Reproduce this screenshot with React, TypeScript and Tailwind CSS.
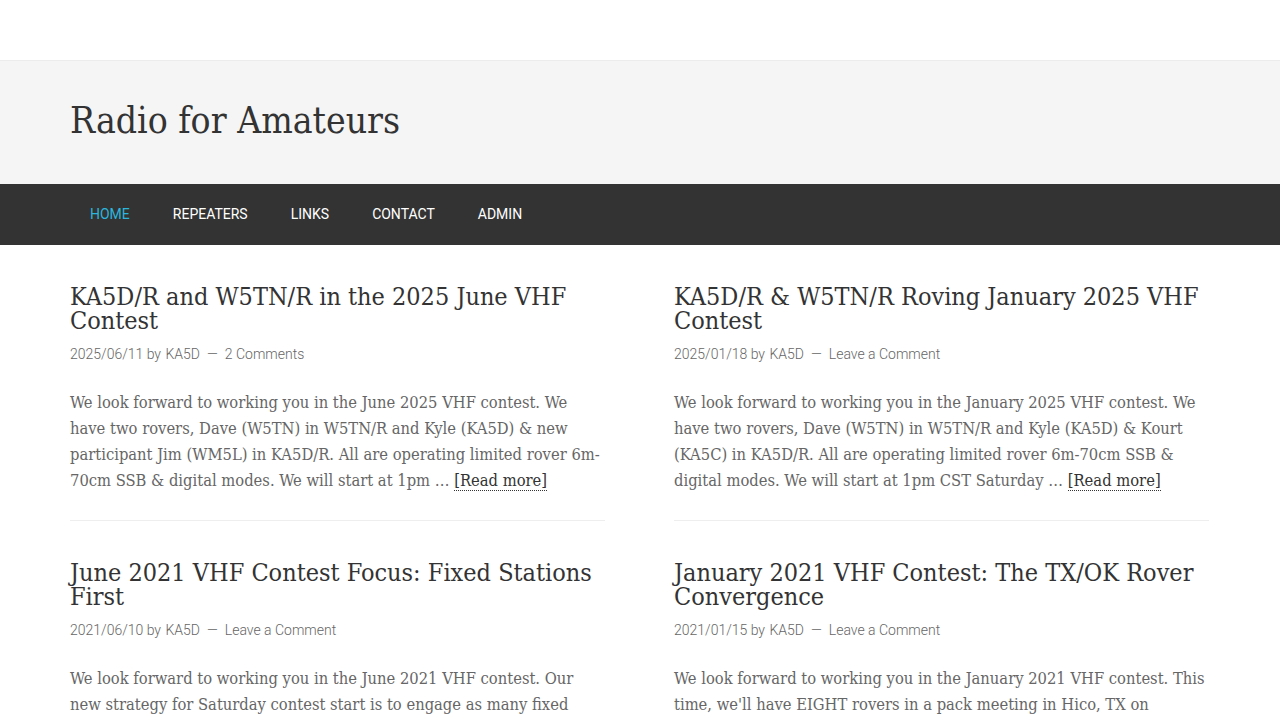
import React from "react";

const slab = { fontFamily: '"DejaVu Serif", "Liberation Serif", serif' };

type Post = {
  title: string;
  date: string;
  comments: string;
  lines: string[];
};

const posts: Post[] = [
  {
    title: "KA5D/R and W5TN/R in the 2025 June VHF Contest",
    date: "2025/06/11",
    comments: "2 Comments",
    lines: [
      "We look forward to working you in the June 2025 VHF contest. We",
      "have two rovers, Dave (W5TN) in W5TN/R and Kyle (KA5D) & new",
      "participant Jim (WM5L) in KA5D/R. All are operating limited rover 6m-",
      "70cm SSB & digital modes. We will start at 1pm …",
    ],
  },
  {
    title: "KA5D/R & W5TN/R Roving January 2025 VHF Contest",
    date: "2025/01/18",
    comments: "Leave a Comment",
    lines: [
      "We look forward to working you in the January 2025 VHF contest. We",
      "have two rovers, Dave (W5TN) in W5TN/R and Kyle (KA5D) & Kourt",
      "(KA5C) in KA5D/R. All are operating limited rover 6m-70cm SSB &",
      "digital modes. We will start at 1pm CST Saturday …",
    ],
  },
  {
    title: "June 2021 VHF Contest Focus: Fixed Stations First",
    date: "2021/06/10",
    comments: "Leave a Comment",
    lines: [
      "We look forward to working you in the June 2021 VHF contest. Our",
      "new strategy for Saturday contest start is to engage as many fixed",
      "stations as possible before we head out on the road to rove the",
      "grids across Texas and Oklahoma …",
    ],
  },
  {
    title: "January 2021 VHF Contest: The TX/OK Rover Convergence",
    date: "2021/01/15",
    comments: "Leave a Comment",
    lines: [
      "We look forward to working you in the January 2021 VHF contest. This",
      "time, we'll have EIGHT rovers in a pack meeting in Hico, TX on",
      "Saturday morning before we all head out to our first grids of",
      "the contest weekend …",
    ],
  },
];

function Article({ p }: { p: Post }) {
  return (
    <article className="flex flex-col border-b border-[#eeeeee] pb-[26px] mb-[40px]">
      <h2
        className="text-[25px] leading-[24px] text-[#333333] font-normal mb-[9px] [font-stretch:condensed]"
        style={slab}
      >
        {p.title}
      </h2>
      <p className="text-[14px] leading-[24px] text-[#666666] font-light mb-[24px] font-['Roboto',sans-serif]">
        {p.date} by <span className="ml-[1px]">KA5D</span>
        <span className="mx-[7px]">—</span>
        <span>{p.comments}</span>
      </p>
      <div
        className="text-[16.4px] leading-[26px] text-[#666666] [font-stretch:condensed]"
        style={slab}
      >
        {p.lines.map((l, i) => (
          <span key={i} className="block whitespace-nowrap">
            {l}
            {i === p.lines.length - 1 && (
              <>
                {" "}
                <span className="text-[#333333] border-b border-dotted border-[#333333]">
                  [Read more]
                </span>
              </>
            )}
          </span>
        ))}
      </div>
    </article>
  );
}

export default function App() {
  const nav = ["HOME", "REPEATERS", "LINKS", "CONTACT", "ADMIN"];
  return (
    <div className="min-h-screen bg-white">
      <div className="h-[61px] bg-white border-b border-[#ececec]" />
      <header className="h-[123px] bg-[#f5f5f5] flex items-center">
        <div className="w-[1140px] mx-auto">
          <h1
            className="text-[37px] leading-[44px] font-light text-[#333333] [font-stretch:condensed] -mt-[4px]"
            style={slab}
          >
            Radio for Amateurs
          </h1>
        </div>
      </header>
      <nav className="h-[61px] bg-[#333333]">
        <ul className="w-[1140px] mx-auto flex h-full items-center gap-[3px] font-['Roboto',sans-serif] text-[14px]">
          {nav.map((n, i) => (
            <li
              key={n}
              className={
                "px-[20px] " + (i === 0 ? "text-[#2bb6dd]" : "text-white")
              }
            >
              {n}
            </li>
          ))}
        </ul>
      </nav>
      <main className="w-[1140px] mx-auto pt-[40px] grid grid-cols-[535px_535px] gap-x-[69px]">
        {posts.map((p) => (
          <Article key={p.title} p={p} />
        ))}
      </main>
    </div>
  );
}
